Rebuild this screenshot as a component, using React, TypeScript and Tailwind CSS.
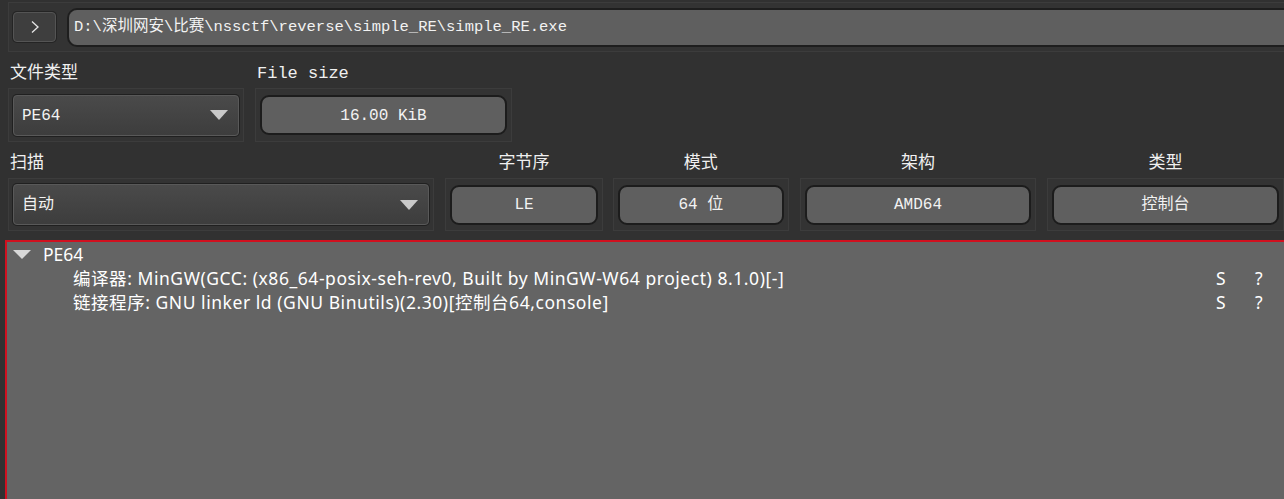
import React from 'react';

const mono = { fontFamily: '"Liberation Mono", "Noto Sans CJK SC", monospace' };
const sans = { fontFamily: '"Noto Sans", "Noto Sans CJK SC", sans-serif' };

const Frame: React.FC<{ className?: string; children: React.ReactNode }> = ({ className = '', children }) => (
    <div className={`border border-[#3c3c3c] bg-[#333333] p-[4px] flex items-center ${className}`}>{children}</div>
);

const Combo: React.FC<{ value: string }> = ({ value }) => (
    <div className="flex-1 h-[41px] rounded-[4px] border border-[#595959] shadow-[0_0_0_1px_#202020] bg-gradient-to-b from-[#4a4a4a] to-[#3d3d3d] flex items-center justify-between pl-[8px] pr-[10px]">
        <span className="text-[16px] text-[#f2f2f2] pt-[1px]">{value}</span>
        <svg width="18" height="10" viewBox="0 0 18 10">
            <path d="M0 0 L18 0 L9 10 Z" fill="#c9c9c9" />
        </svg>
    </div>
);

const Display: React.FC<{ value: string }> = ({ value }) => (
    <div className="flex-1 h-[40px] rounded-[9px] border-2 border-[#1c1c1c] bg-[#5f5f5f] flex items-center justify-center">
        <span className="text-[16px] text-[#f2f2f2] pt-[1px]">{value}</span>
    </div>
);

const Column: React.FC<{ label: string; center?: boolean; width: string; children: React.ReactNode }> = ({ label, center, width, children }) => (
    <div className={`flex flex-col ${width}`}>
        <div className={`h-[36px] pt-[7px] flex items-center ${center ? 'justify-center' : 'pl-[2px]'} text-[17px] text-[#f0f0f0]`}>{label}</div>
        {children}
    </div>
);

const TreeRow: React.FC<{ text: string }> = ({ text }) => (
    <div className="h-[24px] flex items-center text-[17.5px] text-white">
        <span className="pl-[66px] flex-1 whitespace-nowrap tracking-[0.55px]">{text}</span>
        <span className="w-[39px]">S</span>
        <span className="w-[29px]">?</span>
    </div>
);

export default function App() {
    return (
        <div className="w-[1284px] h-[499px] bg-[#313131] overflow-hidden" style={mono}>
            <div className="mt-[2px] ml-[8px] h-[50px] border border-[#3c3c3c] border-r-0 bg-[#333333] flex items-center gap-[11px] pl-[4px]">
                <div className="w-[43px] h-[30px] rounded-[4px] border border-[#545454] shadow-[0_0_0_1px_#242424] bg-[#3e3e3e] flex items-center justify-center">
                    <svg width="10" height="14" viewBox="0 0 10 14">
                        <path d="M2 1.5 L8 7 L2 12.5" fill="none" stroke="#e6e6e6" strokeWidth="1.3" />
                    </svg>
                </div>
                <div className="flex-1 h-[39px] rounded-l-[10px] border-y-2 border-l-2 border-[#1e1e1e] bg-[#5f5f5f] flex items-center pl-[5px]">
                    <span className="text-[15.5px] text-[#f2f2f2] whitespace-nowrap pt-[2px]">D:\深圳网安\比赛\nssctf\reverse\simple_RE\simple_RE.exe</span>
                </div>
            </div>

            <div className="flex gap-[11px] pl-[8px]">
                <Column label="文件类型" width="w-[236px]">
                    <Frame className="h-[54px]"><Combo value="PE64" /></Frame>
                </Column>
                <Column label="File size" width="w-[257px]">
                    <Frame className="h-[54px]"><Display value="16.00 KiB" /></Frame>
                </Column>
            </div>

            <div className="flex pl-[8px]">
                <Column label="扫描" width="w-[428px]">
                    <Frame className="h-[53px]"><Combo value="自动" /></Frame>
                </Column>
                <div className="w-[11px]" />
                <Column label="字节序" center width="w-[158px]">
                    <Frame className="h-[53px]"><Display value="LE" /></Frame>
                </Column>
                <div className="w-[10px]" />
                <Column label="模式" center width="w-[177px]">
                    <Frame className="h-[53px]"><Display value="64 位" /></Frame>
                </Column>
                <div className="w-[11px]" />
                <Column label="架构" center width="w-[237px]">
                    <Frame className="h-[53px]"><Display value="AMD64" /></Frame>
                </Column>
                <div className="w-[11px]" />
                <Column label="类型" center width="w-[237px] shrink-0">
                    <Frame className="h-[53px]"><Display value="控制台" /></Frame>
                </Column>
            </div>

            <div className="mt-[9px] ml-[5px] h-[300px] border-2 border-r-0 border-[#d0101f] bg-[#646464]" style={sans}>
                <div className="h-[24px] flex items-center text-[17.5px] text-white">
                    <svg className="ml-[6px] mr-[12px]" width="18" height="9" viewBox="0 0 18 9">
                        <path d="M0 0 L18 0 L9 9 Z" fill="#d8d8d8" />
                    </svg>
                    <span>PE64</span>
                </div>
                <TreeRow text="编译器: MinGW(GCC: (x86_64-posix-seh-rev0, Built by MinGW-W64 project) 8.1.0)[-]" />
                <TreeRow text="链接程序: GNU linker ld (GNU Binutils)(2.30)[控制台64,console]" />
            </div>
        </div>
    );
}
